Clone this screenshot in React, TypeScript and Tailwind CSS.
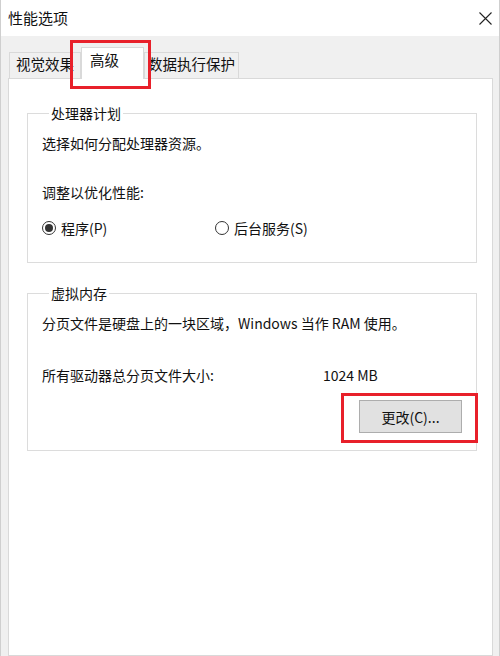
import React from "react";

const font = { fontFamily: '"Noto Sans CJK SC", "Noto Sans", sans-serif' };

function Tab({ label, selected, width }: { label: string; selected?: boolean; width: string }) {
  if (selected) {
    return (
      <div className={`relative z-10 -mb-px h-[32px] ${width} whitespace-nowrap border border-b-0 border-[#d9d9d9] bg-white pl-[8px] pt-[2px] text-[14.5px] leading-[20px] text-[#111]`}>
        {label}
        <span className="pointer-events-none absolute -left-[12px] -right-[8px] -top-[8px] -bottom-[10px] border-[3px] border-[#e8202a]" />
      </div>
    );
  }
  return (
    <div className={`flex h-[26px] ${width} justify-center whitespace-nowrap border border-b-0 border-[#d9d9d9] bg-[#f0f0f0] pt-[1px] text-[14.5px] leading-[20px] text-[#111]`}>
      {label}
    </div>
  );
}

function Radio({ checked, label }: { checked?: boolean; label: string }) {
  return (
    <div className="flex items-center gap-[5px]">
      <span className="flex h-[14px] w-[14px] items-center justify-center rounded-full border border-[#333] bg-white">
        {checked && <span className="h-[8px] w-[8px] rounded-full bg-[#333]" />}
      </span>
      <span>{label}</span>
    </div>
  );
}

export default function App() {
  return (
    <div
      className="flex h-[656px] w-[500px] flex-col overflow-hidden border-x border-[#cfcfcf] bg-[#f0f0f0] text-[14px] leading-[20px] text-[#111]"
      style={font}
    >
      <div className="flex h-[36px] shrink-0 items-center justify-between bg-white pl-[7px] pr-[6px]">
        <span className="text-[15px]">性能选项</span>
        <svg width="13" height="13" viewBox="0 0 13 13" className="mr-[1px]">
          <path d="M0.5 0.5 L12.5 12.5 M12.5 0.5 L0.5 12.5" stroke="#222" strokeWidth="1.1" />
        </svg>
      </div>

      <div className="flex flex-1 flex-col pl-[7px] pr-[6px]">
        <div className="flex h-[42px] shrink-0 items-end pl-px">
          <Tab label="视觉效果" width="w-[72px]" />
          <Tab label="高级" selected width="w-[63px]" />
          <Tab label="数据执行保护" width="w-[95px]" />
        </div>

        <div className="flex flex-1 flex-col border border-[#d9d9d9] bg-white pl-[18px] pr-[15px] pt-[24px]">
          <fieldset className="border border-[#dcdcdc] pb-[24px] pl-[14px]">
            <legend className="ml-[7px] px-[2px]">处理器计划</legend>
            <p className="mt-[10px]">选择如何分配处理器资源。</p>
            <p className="mt-[29px]">调整以优化性能:</p>
            <div className="mt-[16px] flex">
              <div className="w-[173px]">
                <Radio checked label="程序(P)" />
              </div>
              <Radio label="后台服务(S)" />
            </div>
          </fieldset>

          <fieldset className="mt-[20px] border border-[#dcdcdc] pb-[17px] pl-[14px] pr-[14px]">
            <legend className="ml-[7px] px-[2px]">虚拟内存</legend>
            <p className="mt-[10px]">分页文件是硬盘上的一块区域，Windows 当作 RAM 使用。</p>
            <div className="mt-[32px] flex">
              <span className="w-[281px]">所有驱动器总分页文件大小:</span>
              <span>1024 MB</span>
            </div>
            <div className="mt-[15px] flex justify-end">
              <div className="relative">
                <button className="h-[33px] w-[103px] border border-[#adadad] bg-[#e1e1e1] text-[14px] text-[#111]">
                  更改(C)...
                </button>
                <span className="pointer-events-none absolute -left-[18px] -right-[16px] -top-[7px] -bottom-[10px] border-[3px] border-[#e8202a]" />
              </div>
            </div>
          </fieldset>
        </div>
      </div>
    </div>
  );
}
